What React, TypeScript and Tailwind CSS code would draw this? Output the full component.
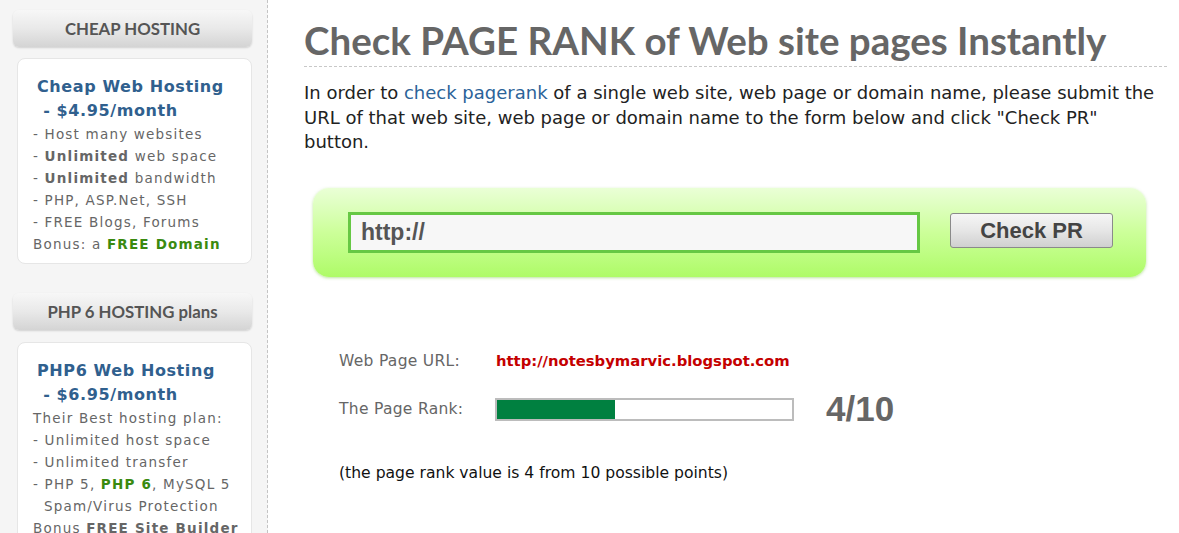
import React from 'react';

const dv = "font-['DejaVu_Sans',sans-serif]";

function SideHeader({ title }: { title: string }) {
  return (
    <div className="mx-[13px] w-[239px] h-[37px] rounded-[6px] bg-gradient-to-b from-[#f7f7f7] via-[#e9e9e9] to-[#d4d4d4] shadow-[0_1px_2px_rgba(0,0,0,0.15)] flex items-center justify-center">
      <span className="font-['Lato',sans-serif] text-[16.8px] font-bold text-[#555]">{title}</span>
    </div>
  );
}

function SideCard({ children }: { children: React.ReactNode }) {
  return (
    <div className="ml-[17px] w-[235px] mt-[11px] rounded-[8px] bg-white border border-[#e6e6e6] pl-[15px] pr-2 pt-[16px] pb-[8px]">
      {children}
    </div>
  );
}

export default function App() {
  const item = "text-[13.5px] leading-[22px] tracking-[1.2px] text-[#666]";
  const title = "text-[16px] leading-[24px] font-bold tracking-[0.6px] text-[#30608e]";
  return (
    <div className={`flex w-[1179px] h-[533px] overflow-hidden bg-white ${dv}`}>
      <aside className="w-[268px] shrink-0 bg-[#f5f5f5] border-r border-dashed border-[#c4c4c4] pt-[10px]">
        <SideHeader title="CHEAP HOSTING" />
        <SideCard>
          <div className={`${title} pl-[4px]`}>Cheap Web Hosting</div>
          <div className={`${title} pl-[4px]`}>&nbsp;- $4.95/month</div>
          <div className={item}>- Host many websites</div>
          <div className={item}>- <b>Unlimited</b> web space</div>
          <div className={item}>- <b>Unlimited</b> bandwidth</div>
          <div className={item}>- PHP, ASP.Net, SSH</div>
          <div className={item}>- FREE Blogs, Forums</div>
          <div className={item}>Bonus: a <b className="text-[#3a8a10]">FREE Domain</b></div>
        </SideCard>
        <div className="h-[29px]" />
        <SideHeader title="PHP 6 HOSTING plans" />
        <div className="pt-[1px]">
          <SideCard>
            <div className={`${title} pl-[4px]`}>PHP6 Web Hosting</div>
            <div className={`${title} pl-[4px]`}>&nbsp;- $6.95/month</div>
            <div className={item}>Their Best hosting plan:</div>
            <div className={item}>- Unlimited host space</div>
            <div className={item}>- Unlimited transfer</div>
            <div className={item}>- PHP 5, <b className="text-[#3a8a10]">PHP 6</b>, MySQL 5</div>
            <div className={item}>&nbsp;&nbsp;Spam/Virus Protection</div>
            <div className={item}>Bonus <b>FREE Site Builder</b></div>
          </SideCard>
        </div>
      </aside>

      <main className="flex-1 pl-[36px] pr-[12px] pt-[17px]">
        <h1 className="font-['Lato',sans-serif] text-[38.5px] leading-[46px] font-bold text-[#666] pb-[3px] border-b border-dashed border-[#c8c8c8]">
          Check PAGE RANK of Web site pages Instantly
        </h1>
        <p className="mt-[14px] text-[18px] leading-[24.5px] text-[#222] pr-[4px]">
          In order to <span className="text-[#2b6399]">check pagerank</span> of a single web site, web page or domain name, please submit the URL of that web site, web page or domain name to the form below and click "Check PR" button.
        </p>

        <div className="mt-[33px] ml-[9px] w-[833px] h-[89px] rounded-[16px] bg-gradient-to-b from-[#eaffd6] via-[#ccff99] to-[#aefb66] shadow-[0_1px_3px_rgba(120,200,60,0.5)] flex items-center pl-[35px]">
          <div className="w-[572px] h-[41px] border-[3px] border-[#66c844] bg-[#f7f7f7] flex items-center pl-[10px]">
            <span className="font-['Liberation_Sans',sans-serif] font-bold text-[23px] text-[#555]">http://</span>
          </div>
          <button className="ml-[30px] w-[163px] h-[35px] -mt-[4px] rounded-[3px] border border-[#8a8a8a] bg-gradient-to-b from-[#f6f6f6] via-[#e6e6e6] to-[#d0d0d0] font-['Liberation_Sans',sans-serif] font-bold text-[22px] text-[#444]">
            Check PR
          </button>
        </div>

        <div className="mt-[73px] ml-[35px]">
          <div className="flex items-center h-[24px]">
            <span className="w-[157px] text-[15.5px] tracking-[0.3px] text-[#666]">Web Page URL:</span>
            <span className="text-[14.8px] font-bold text-[#c40000]">http://notesbymarvic.blogspot.com</span>
          </div>
          <div className="flex items-center mt-[24px] h-[24px]">
            <span className="w-[156px] text-[15.5px] tracking-[0.3px] text-[#666]">The Page Rank:</span>
            <div className="w-[299px] h-[23px] border-2 border-[#bcbcbc] bg-white">
              <div className="h-full bg-[#008040]" style={{ width: `${(4 / 10) * 100}%` }} />
            </div>
            <span className="ml-[32px] font-['Liberation_Sans',sans-serif] font-bold text-[35px] text-[#666]">4/10</span>
          </div>
          <div className="mt-[40px] text-[15.6px] text-[#111]">(the page rank value is 4 from 10 possible points)</div>
        </div>
      </main>
    </div>
  );
}
